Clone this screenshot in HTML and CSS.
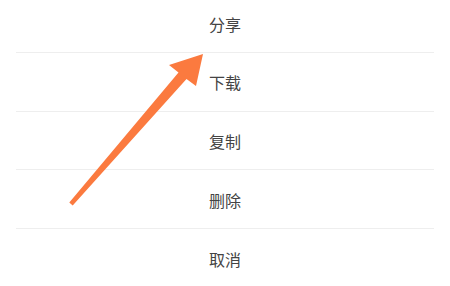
FILE: index.html
```html
<!DOCTYPE html>
<html lang="zh-CN">
<head>
<meta charset="utf-8">
<link rel="stylesheet" href="styles.css">
</head>
<body>
<div class="sheet">
  <ul class="menu">
    <li class="item">分享</li>
    <li class="item">下载</li>
    <li class="item">复制</li>
    <li class="item">删除</li>
    <li class="item last">取消</li>
  </ul>
  <svg class="arrow" width="450" height="286" viewBox="0 0 450 286" xmlns="http://www.w3.org/2000/svg">
    <polygon fill="#fb7a3f" points="203,54 169,65 178.5,72.5 69.3,202.6 72.7,205.4 186.5,79 196,86"/>
  </svg>
</div>
</body>
</html>
```

FILE: styles.css
```css
html, body {
  margin: 0;
  padding: 0;
  background: #ffffff;
}
.sheet {
  position: relative;
  width: 450px;
  height: 286px;
  overflow: hidden;
  font-family: "Noto Sans CJK SC", "Noto Sans", sans-serif;
}
.menu {
  list-style: none;
  margin: -5.67px 16px 0 16px;
  padding: 0;
}
.item {
  box-sizing: border-box;
  height: 58.67px;
  display: flex;
  align-items: center;
  justify-content: center;
  padding-top: 1px;
  border-bottom: 1px solid #eeeeee;
  font-size: 16px;
  color: #444444;
  line-height: 1;
}
.item.last {
  border-bottom: none;
}
.arrow {
  position: absolute;
  left: 0;
  top: 0;
}
```
